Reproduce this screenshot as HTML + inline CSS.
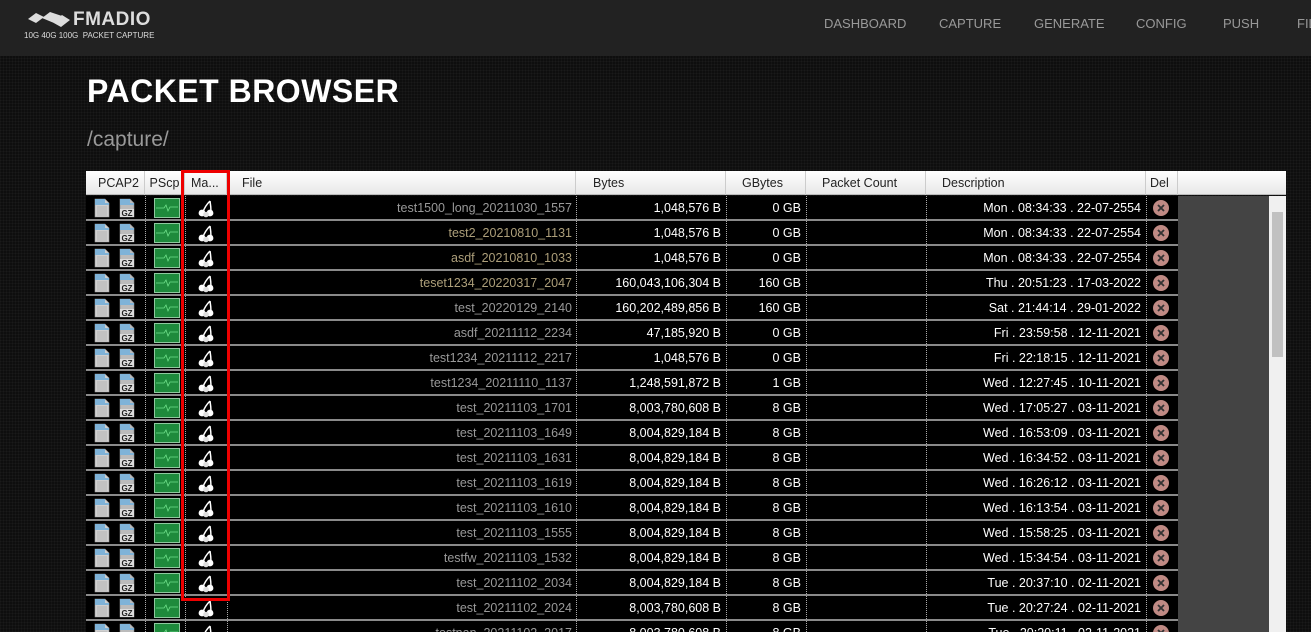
<!DOCTYPE html>
<html><head><meta charset="utf-8">
<style>
*{margin:0;padding:0;box-sizing:border-box}
html,body{width:1311px;height:632px;overflow:hidden}
body{background:#0e0e0e;font-family:"Liberation Sans",sans-serif;position:relative;
background-image:repeating-linear-gradient(0deg,rgba(255,255,255,0.025) 0 1px,transparent 1px 3px),repeating-linear-gradient(90deg,rgba(255,255,255,0.025) 0 1px,transparent 1px 3px);}
.nav{position:absolute;left:0;top:0;width:1311px;height:56px;background:#222}
.logo{position:absolute;left:28px;top:9px;color:#ddd;font-weight:bold;font-size:19px;letter-spacing:0.5px}
.logo .t{position:absolute;left:45px;top:0}
.logo .s{position:absolute;left:-4px;top:22px;font-size:8px;font-weight:normal;white-space:nowrap;letter-spacing:0}
.nav a{position:absolute;top:16px;color:#999;font-size:13px;text-decoration:none}
h1{position:absolute;left:87px;top:73px;color:#fff;font-size:32px;font-weight:bold;letter-spacing:0.5px}
.sub{position:absolute;left:87px;top:128px;color:#999;font-size:21px}
.tbl{position:absolute;left:86px;top:171px;width:1200px}
.hdr{height:24px;background:linear-gradient(#fff,#e8e8e8);border-bottom:1px solid #bbb;position:relative;font-size:12.5px;color:#222}
.hdr div{position:absolute;top:0;height:24px;line-height:24px;border-right:1px solid #ccc}
.gray{position:absolute;left:1092px;top:25px;width:108px;height:440px;background:#444}
.sb{position:absolute;left:1183px;top:25px;width:17px;height:440px;background:#f0f0f0}
.sb i{position:absolute;left:3px;top:16px;width:11px;height:145px;background:#c1c1c1}
.row{position:absolute;left:0;width:1092px;height:25px;background:#000;border-bottom:2px solid #8a8a8a;font-size:12.5px}
.row span{position:absolute;top:5px;text-align:right;white-space:nowrap}
.f{left:141px;width:345px;color:#999}
.f.t{color:#ad9f7a}
.b{left:490px;width:145px;color:#fff}
.g{left:640px;width:75px;color:#fff}
.d{left:840px;width:215px;color:#fff}
.row svg{position:absolute}
.dl{position:absolute;top:0;height:23px;border-left:1px dotted #aaa}
</style></head><body>
<svg width="0" height="0" style="position:absolute">
<defs>
<symbol id="doc" viewBox="0 0 16 20"><path d="M1 1h10l4 4v14H1z" fill="#d0d0d0" stroke="#999" stroke-width=".6"/><path d="M1 1h10v4h4v2H1z" fill="#7fb3d8"/><path d="M3 9h10M3 11h10M3 13h10M3 15h10M3 17h10" stroke="#aaa" stroke-width=".7"/></symbol>
<symbol id="gz" viewBox="0 0 16 20"><path d="M1 1h10l4 4v14H1z" fill="#bbb" stroke="#888" stroke-width=".6"/><path d="M1 1h10v4h4v2H1z" fill="#7fb3d8"/><rect x="1" y="11" width="14" height="8" fill="#ddd"/><text x="8" y="18" font-size="8" font-weight="bold" text-anchor="middle" font-family="Liberation Sans" fill="#222">GZ</text></symbol>
<symbol id="ps" viewBox="0 0 26 20"><rect x=".5" y=".5" width="25" height="19" fill="#1e8a3c" stroke="#8fc89f"/><path d="M2 10h8l2-3 2 6 2-4h8" stroke="#6fe08a" fill="none" stroke-width=".8"/></symbol>
<symbol id="ch" viewBox="0 0 20 20"><path d="M14 3Q9 8 7 14M14 3q1 6 1 11" stroke="#fff" fill="none" stroke-width="1.5"/><circle cx="6" cy="15" r="3.4" fill="#fff"/><circle cx="14" cy="15" r="3.4" fill="#fff"/><circle cx="10" cy="16.5" r="2.8" fill="#ddd"/></symbol>
<symbol id="x" viewBox="0 0 18 18"><circle cx="9" cy="9" r="8" fill="#c08a84"/><path d="M6 6l6 6M12 6l-6 6" stroke="#333" stroke-width="1.8"/></symbol>
</defs></svg>
<div class="nav">
<div class="logo"><svg width="42" height="18" viewBox="0 0 42 18" style="position:absolute;left:0;top:2px"><path d="M0 8l8-6 8 4-8 6z M14 7l8-6 12 4-8 7z M24 11l10-7 8 5-9 7z" fill="#ddd"/></svg><span class="t">FMADIO</span><span class="s">10G 40G 100G &nbsp;PACKET CAPTURE</span></div>
<a style="left:824px">DASHBOARD</a><a style="left:939px">CAPTURE</a><a style="left:1034px">GENERATE</a><a style="left:1136px">CONFIG</a><a style="left:1223px">PUSH</a><a style="left:1297px">FILES</a>
</div>
<h1>PACKET BROWSER</h1>
<div class="sub">/capture/</div>
<div class="tbl">
<div class="hdr">
<div style="left:0;width:59px;text-align:right;padding-right:5px">PCAP2</div>
<div style="left:59px;width:40px;text-align:center">PScp</div>
<div style="left:99px;width:42px;padding-left:6px">Ma...</div>
<div style="left:141px;width:349px;padding-left:15px">File</div>
<div style="left:490px;width:150px;padding-left:17px">Bytes</div>
<div style="left:640px;width:80px;padding-left:16px">GBytes</div>
<div style="left:720px;width:120px;padding-left:16px">Packet Count</div>
<div style="left:840px;width:220px;padding-left:16px">Description</div>
<div style="left:1060px;width:32px;padding-left:4px">Del</div>
</div>
<div class="gray"></div>
<div class="sb"><i></i></div>
<div id="rows"></div>
</div>
<div style="position:absolute;left:181px;top:170px;width:49px;height:431px;border:3px solid #e00;z-index:5"></div>
<script>
var d=[
["test1500_long_20211030_1557","1,048,576 B","0 GB","Mon . 08:34:33 . 22-07-2554",0],
["test2_20210810_1131","1,048,576 B","0 GB","Mon . 08:34:33 . 22-07-2554",1],
["asdf_20210810_1033","1,048,576 B","0 GB","Mon . 08:34:33 . 22-07-2554",1],
["teset1234_20220317_2047","160,043,106,304 B","160 GB","Thu . 20:51:23 . 17-03-2022",1],
["test_20220129_2140","160,202,489,856 B","160 GB","Sat . 21:44:14 . 29-01-2022",0],
["asdf_20211112_2234","47,185,920 B","0 GB","Fri . 23:59:58 . 12-11-2021",0],
["test1234_20211112_2217","1,048,576 B","0 GB","Fri . 22:18:15 . 12-11-2021",0],
["test1234_20211110_1137","1,248,591,872 B","1 GB","Wed . 12:27:45 . 10-11-2021",0],
["test_20211103_1701","8,003,780,608 B","8 GB","Wed . 17:05:27 . 03-11-2021",0],
["test_20211103_1649","8,004,829,184 B","8 GB","Wed . 16:53:09 . 03-11-2021",0],
["test_20211103_1631","8,004,829,184 B","8 GB","Wed . 16:34:52 . 03-11-2021",0],
["test_20211103_1619","8,004,829,184 B","8 GB","Wed . 16:26:12 . 03-11-2021",0],
["test_20211103_1610","8,004,829,184 B","8 GB","Wed . 16:13:54 . 03-11-2021",0],
["test_20211103_1555","8,004,829,184 B","8 GB","Wed . 15:58:25 . 03-11-2021",0],
["testfw_20211103_1532","8,004,829,184 B","8 GB","Wed . 15:34:54 . 03-11-2021",0],
["test_20211102_2034","8,004,829,184 B","8 GB","Tue . 20:37:10 . 02-11-2021",0],
["test_20211102_2024","8,003,780,608 B","8 GB","Tue . 20:27:24 . 02-11-2021",0],
["testnan_20211102_2017","8,003,780,608 B","8 GB","Tue . 20:20:11 . 02-11-2021",0]];
var h="";
d.forEach(function(r,i){
h+='<div class="row" style="top:'+(25+i*25)+'px">'+
'<svg style="left:8px;top:2px" width="16" height="20"><use href="#doc"/></svg>'+
'<svg style="left:33px;top:2px" width="16" height="20"><use href="#gz"/></svg>'+
'<svg style="left:68px;top:2px" width="26" height="20"><use href="#ps"/></svg>'+
'<svg style="left:110px;top:2px" width="20" height="20"><use href="#ch"/></svg>'+
'<span class="f'+(r[4]?' t':'')+'">'+r[0]+'</span><span class="b">'+r[1]+'</span><span class="g">'+r[2]+'</span><span class="d">'+r[3]+'</span>'+
'<svg style="left:1066px;top:3px" width="18" height="18"><use href="#x"/></svg>'+
[59,99,141,490,640,720,840,1060].map(function(x){return '<div class="dl" style="left:'+x+'px"></div>'}).join('')+
'</div>';});
document.getElementById('rows').innerHTML=h;
</script>
</body></html>
